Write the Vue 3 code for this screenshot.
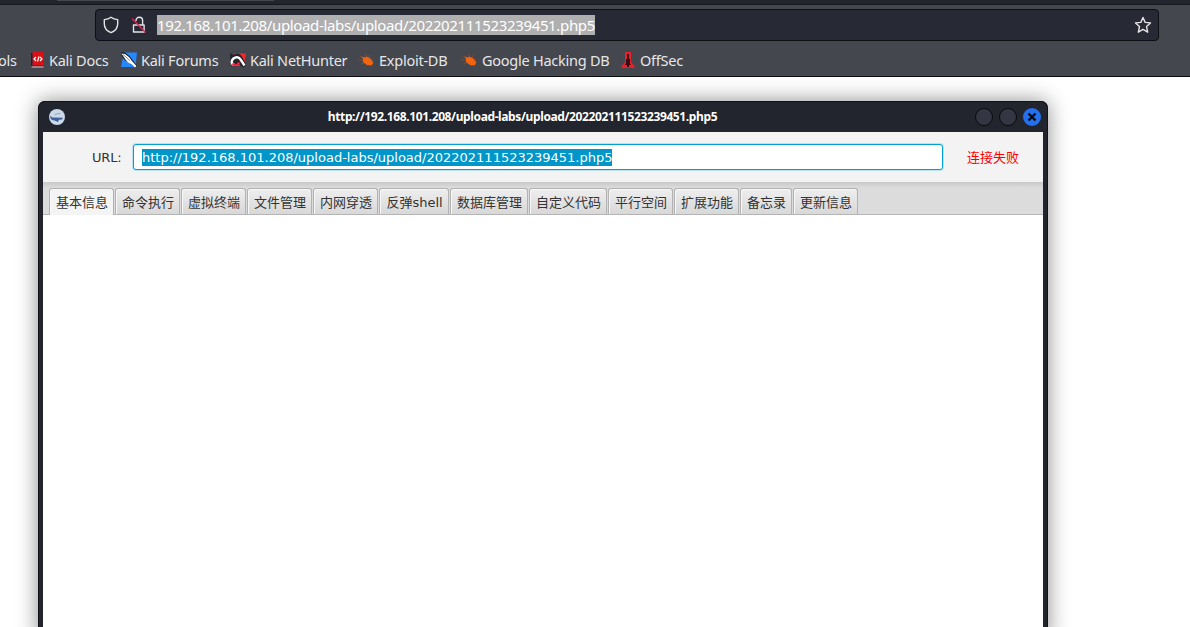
<template>
  <div class="screen">
    <!-- Browser chrome -->
    <header class="browser">
      <div class="tab-strip"><span class="tab-edge"></span></div>
      <div class="nav-row">
        <div class="address-bar">
          <svg class="shield" width="16" height="18" viewBox="0 0 16 18">
            <path d="M8 1.2C6.2 2.5 4 3.3 1.3 3.6v4.2c0 4.2 2.4 7.2 6.7 8.9 4.3-1.7 6.7-4.7 6.7-8.9V3.6C12 3.3 9.8 2.5 8 1.2z" />
          </svg>
          <svg class="lock" width="16" height="18" viewBox="0 0 16 18">
            <path d="M5 5V4.5a3.3 3.3 0 0 1 6.6 0V9M2.500 9h10.600v7H2.500z" />
            <path class="slash" d="M1 2.500l13.500 14" />
          </svg>
          <span class="address">192.168.101.208/upload-labs/upload/202202111523239451.php5</span>
          <svg class="star" width="18" height="18" viewBox="0 0 18 18">
            <path d="M9 1.5l2.2 4.900 5.300.5-4 3.600 1.200 5.700L9 13.400l-4.700 2.800 1.200-5.700-4-3.600 5.300-.5z" />
          </svg>
        </div>
      </div>
      <nav class="bookmarks">
        <span class="cut">ols</span>
        <a v-for="item in bookmarks" :key="item.label" class="bookmark">
          <svg width="16" height="16" viewBox="0 0 16 16">
            <g v-if="item.icon === 'docs'">
              <path fill="#17203f" d="M2 1h2v14H2z" />
              <path fill="#d91117" d="M3.500 0h11v13h-11z" />
              <path fill="#8f1420" d="M2.500 13h12v1.500h-12z" />
              <path fill="#d8cfcf" d="M2.500 14.500h12v1h-12z" />
              <path fill="none" stroke="#fff" stroke-width="1.2" d="M7 5L5 7l2 2M11 5l2 2-2 2M10 4.500L8.500 9.500" />
            </g>
            <g v-else-if="item.icon === 'forums'">
              <path fill="#2588ff" d="M3 .5h13L14.500 15H0z" />
              <path fill="#16202e" d="M0 0l4 .5 5 4 3 4 4 5-1 2-4-2-3-3-4-2-3-4z" />
              <path fill="#fff" d="M.5 1.500L4 2l4.500 3.500 2 3 5 5.500-1.500 1.500-4-3.500-3-1.500-2.500-3z" />
              <path fill="none" stroke="#59636f" stroke-width=".8" d="M2 2.500l7 6" />
            </g>
            <g v-else-if="item.icon === 'nethunter'">
              <path fill="#f02b30" d="M4 1.500h12L14 14H6z" />
              <path fill="#22252c" d="M0 1l3 2 4-1.500c3 0 5 2 6 5l3 6-2 3-3-1-3-4-3 4H3L0 11V7z" />
              <path fill="none" stroke="#fff" stroke-width="2.4" d="M14.500 13.500L11.500 9C9.500 4.500 6 4.500 3.500 6.500c-3 2.500-2 6 1 6.500" />
              <path fill="none" stroke="#f0263a" stroke-width="2" d="M2.500 11.500c1.500 3 5 2 7-1" />
            </g>
            <g v-else-if="item.icon === 'bug'">
              <path fill="none" stroke="#8a4b30" stroke-width="1" d="M1 4l5 2M0 8h5M2 12l5-2M7 2v4M11 3l-1 3M14 7h-3M15 10h-4M8 14l1-3M13 13l-2-2" />
              <path fill="#f26410" d="M2.500 5l4 .5 1-1 3 1.500 3 3 .5 3-2 1.500-4-.5L4 10V7z" />
            </g>
            <g v-else>
              <path fill="#e8202c" d="M5 0h6v10l3.500 4v2h-13v-2L5 10z" />
              <path fill="#3a0b12" d="M7 2h2v5h1v5l1 1H9v2H7v-2H5l1-2V7h1z" />
            </g>
          </svg>
          <span class="bookmark-label" :style="{ width: item.width + 'px' }">{{ item.label }}</span>
        </a>
      </nav>
    </header>

    <!-- Shell manager window -->
    <section class="window">
      <div class="title-bar">
        <svg class="app-icon" width="16" height="16" viewBox="0 0 16 16">
          <circle cx="8" cy="8" r="8" fill="#cbd9e8" />
          <path fill="#8ea2b5" d="M5 5l6-1 1 .8-6 1z" />
          <path fill="#3e629b" d="M1 6.500c1 1.500 2 2 4 2l9 .3-1 1.700-3 .3-1 2.200-3.500-1.500L3 11C1.500 10 1 8 1 6.500z" />
        </svg>
        <span class="title">http://192.168.101.208/upload-labs/upload/202202111523239451.php5</span>
        <div class="controls">
          <span class="control"></span>
          <span class="control"></span>
          <span class="control close">
            <svg width="18" height="18" viewBox="0 0 18 18"><path d="M5.500 5.500l7 7M12.500 5.500l-7 7" /></svg>
          </span>
        </div>
      </div>
      <div class="url-row">
        <label class="url-label">URL:</label>
        <div class="url-field">
          <span class="url-text">http://192.168.101.208/upload-labs/upload/202202111523239451.php5</span>
        </div>
        <span class="status">连接失败</span>
      </div>
      <div class="tabs">
        <div
          v-for="tab in tabs"
          :key="tab.label"
          :class="['tab', { active: tab.label === activeTab }]"
          :style="{ width: tab.width + 'px' }"
          @click="activeTab = tab.label"
        >
          {{ tab.label }}
        </div>
      </div>
      <div class="content"></div>
    </section>
  </div>
</template>

<script setup>
import { ref } from "vue";

const bookmarks = [
  { label: "Kali Docs", icon: "docs", width: 60 },
  { label: "Kali Forums", icon: "forums", width: 77 },
  { label: "Kali NetHunter", icon: "nethunter", width: 97 },
  { label: "Exploit-DB", icon: "bug", width: 71 },
  { label: "Google Hacking DB", icon: "bug", width: 126 },
  { label: "OffSec", icon: "offsec", width: 45 },
];

const tabs = [
  { label: "基本信息", width: 65 },
  { label: "命令执行", width: 65 },
  { label: "虚拟终端", width: 65 },
  { label: "文件管理", width: 65 },
  { label: "内网穿透", width: 65 },
  { label: "反弹shell", width: 70 },
  { label: "数据库管理", width: 78 },
  { label: "自定义代码", width: 78 },
  { label: "平行空间", width: 65 },
  { label: "扩展功能", width: 65 },
  { label: "备忘录", width: 52 },
  { label: "更新信息", width: 65 },
];

const activeTab = ref("基本信息");
</script>

<style>
body {
  margin: 0;
  background: #fff;
}
</style>

<style scoped>
.screen {
  width: 1190px;
  height: 627px;
  overflow: hidden;
  background: #fff;
  font-family: "Noto Sans", "Noto Sans CJK SC", sans-serif;
}

.browser {
  box-sizing: border-box;
  height: 77px;
  background: #44474e;
  border-bottom: 1px solid #0c0d10;
}

.tab-strip {
  box-sizing: border-box;
  height: 5px;
  background: #23252e;
  border-bottom: 1px solid #16171c;
}

.tab-edge {
  display: block;
  width: 217px;
  height: 1px;
  margin-left: 57px;
  background: #44474e;
}

.nav-row {
  padding: 4px 31px 0 95px;
}

.address-bar {
  box-sizing: border-box;
  display: flex;
  align-items: center;
  height: 32px;
  padding: 0 6px 0 7px;
  background: #272934;
  border: 1px solid #0e0f13;
  border-radius: 4px;
}

.address-bar svg {
  flex: none;
  fill: none;
  stroke: #e4e4e6;
  stroke-width: 1.4;
  stroke-linejoin: round;
}

.lock {
  margin-left: 12px;
}

.address-bar .slash {
  stroke: #e8204e;
}

.address {
  height: 20px;
  margin-left: 10px;
  line-height: 20px;
  font-size: 15px;
  letter-spacing: -0.35px;
  color: #fff;
  background: #afafaf;
  white-space: nowrap;
}

.star {
  margin-left: auto;
}

.bookmarks {
  display: flex;
  align-items: center;
  height: 20px;
  padding-top: 9px;
  font-size: 14.5px;
  letter-spacing: -0.25px;
  line-height: 20px;
  color: #e6e6e8;
}

.cut {
  width: 18px;
  margin: 0 13px 0 -2px;
  white-space: nowrap;
}

.bookmark {
  display: flex;
  align-items: center;
  gap: 4px;
  margin-right: 12px;
}

.bookmark svg {
  flex: none;
}

.bookmark-label {
  white-space: nowrap;
}

.window {
  box-sizing: border-box;
  width: 1010px;
  height: 540px;
  margin: 24px 0 0 38px;
  padding: 0 5px;
  background: #22252d;
  border-radius: 7px 7px 0 0;
  box-shadow: 0 0 21px rgba(0, 0, 0, 0.45), inset 0 0 0 1px #111318;
}

.title-bar {
  display: flex;
  align-items: center;
  height: 31px;
  padding: 0 2px 0 6px;
}

.title {
  flex: 1;
  padding-left: 5px;
  text-align: center;
  font-size: 12px;
  font-weight: 700;
  letter-spacing: -0.38px;
  color: #fff;
  white-space: nowrap;
}

.controls {
  display: flex;
  gap: 6px;
}

.control {
  box-sizing: border-box;
  width: 18px;
  height: 18px;
  background: #343743;
  border: 1px solid #08090b;
  border-radius: 50%;
}

.close {
  background: #2470ef;
  border: none;
}

.close svg {
  display: block;
  fill: none;
  stroke: #090b12;
  stroke-width: 2.4;
}

.url-row {
  display: flex;
  align-items: center;
  height: 50px;
  background: #f3f3f3;
  font-family: "DejaVu Sans", "Noto Sans CJK SC", sans-serif;
  font-size: 13px;
  color: #333;
}

.url-label {
  width: 40px;
  margin-left: 49px;
  letter-spacing: -0.2px;
}

.url-field {
  box-sizing: border-box;
  display: flex;
  align-items: center;
  width: 810px;
  height: 26px;
  margin-left: 1px;
  padding-left: 8px;
  background: #fff;
  border: 1px solid #039ed3;
  border-radius: 3px;
  box-shadow: 0 0 0 1px #b9e3f1;
}

.url-text {
  height: 16px;
  padding-top: 1px;
  line-height: 16px;
  color: #fff;
  background: #0096c9;
  white-space: nowrap;
}

.status {
  margin-left: 24px;
  padding-bottom: 2px;
  color: #ff0000;
}

.tabs {
  box-sizing: border-box;
  display: flex;
  align-items: flex-end;
  gap: 1px;
  height: 33px;
  padding-left: 6px;
  background: linear-gradient(#c9c9c9, #dcdcdc 6px);
  border-bottom: 1px solid #b5b5b5;
}

.tab {
  box-sizing: border-box;
  height: 26px;
  padding-left: 1px;
  line-height: 28px;
  border: 1px solid #b2b2b2;
  border-bottom: none;
  border-radius: 3px 3px 0 0;
  background: linear-gradient(#eeeeee, #d8d8d8);
  box-shadow: inset 1px 1px 0 #f7f7f7;
  font-family: "DejaVu Sans", "Noto Sans CJK SC", sans-serif;
  font-size: 13px;
  color: #333;
  text-align: center;
  white-space: nowrap;
  cursor: default;
}

.tab.active {
  height: 27px;
  margin-bottom: -1px;
  background: #f4f4f4;
}

.content {
  height: 420px;
  background: #fff;
}
</style>
